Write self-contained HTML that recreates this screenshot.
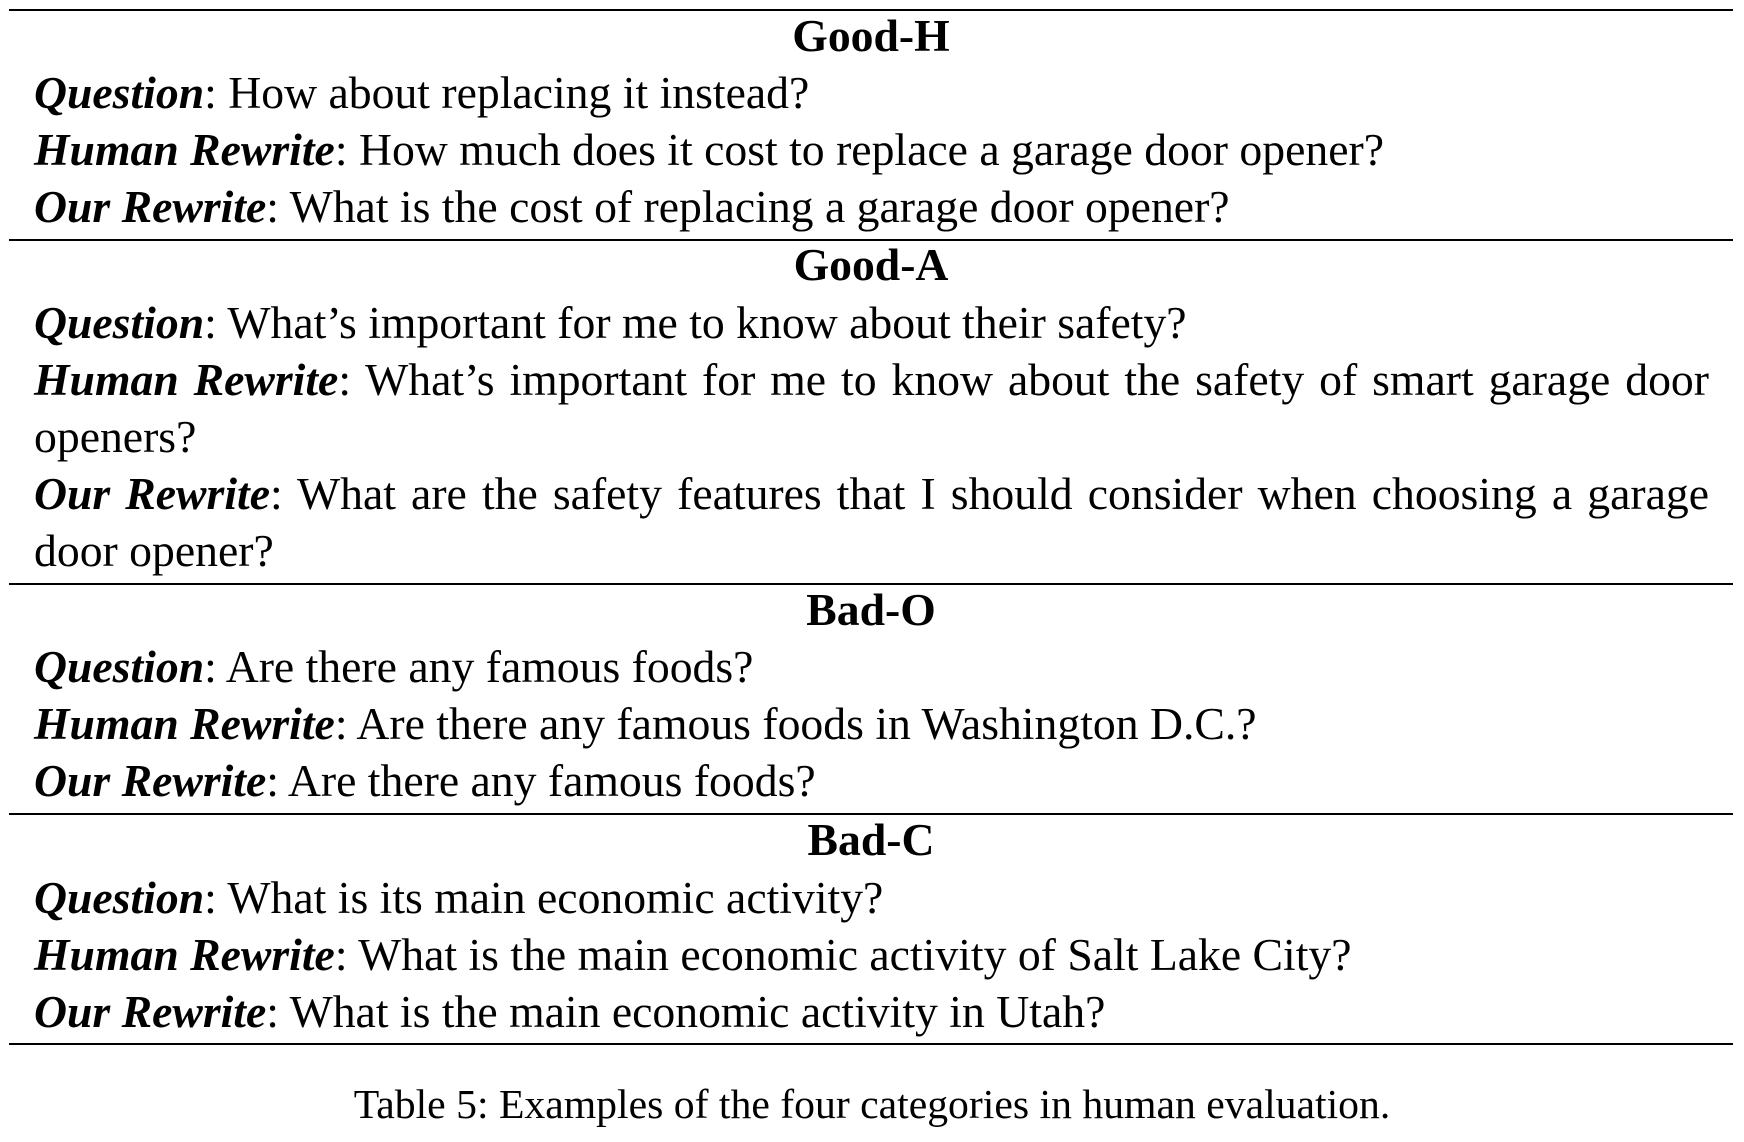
<!DOCTYPE html>
<html><head><meta charset="utf-8"><style>
html,body{margin:0;padding:0;background:#fff;}
body{width:1744px;height:1142px;position:relative;overflow:hidden;font-family:"Liberation Serif","Times New Roman",serif;font-size:45.7px;color:#000;}
.l{position:absolute;left:34px;width:1675px;height:57px;line-height:57px;white-space:nowrap;margin-top:-2px;}
.h{text-align:center;font-weight:bold;left:9px;width:1724px;}
.j{text-align:justify;text-align-last:justify;}
.r{position:absolute;left:9px;width:1724px;height:2px;background:#000;}
b i,i b{font-weight:bold;font-style:italic;}
.c{position:absolute;left:0;width:1744px;text-align:center;top:1077px;line-height:57px;font-size:41.7px;}
</style></head><body>
<div class="r" style="top:9px"></div>
<div class="l h" style="top:9px">Good-H</div>
<div class="l" style="top:66px"><b><i>Question</i></b>: How about replacing it instead?</div>
<div class="l" style="top:123px"><b><i>Human Rewrite</i></b>: How much does it cost to replace a garage door opener?</div>
<div class="l" style="top:180px"><b><i>Our Rewrite</i></b>: What is the cost of replacing a garage door opener?</div>
<div class="r" style="top:239px"></div>
<div class="l h" style="top:238px">Good-A</div>
<div class="l" style="top:296px"><b><i>Question</i></b>: What’s important for me to know about their safety?</div>
<div class="l j" style="top:353px"><b><i>Human Rewrite</i></b>: What’s important for me to know about the safety of smart garage door</div>
<div class="l" style="top:410px">openers?</div>
<div class="l j" style="top:467px"><b><i>Our Rewrite</i></b>: What are the safety features that I should consider when choosing a garage</div>
<div class="l" style="top:524px">door opener?</div>
<div class="r" style="top:583px"></div>
<div class="l h" style="top:583px">Bad-O</div>
<div class="l" style="top:640px"><b><i>Question</i></b>: Are there any famous foods?</div>
<div class="l" style="top:697px"><b><i>Human Rewrite</i></b>: Are there any famous foods in Washington D.C.?</div>
<div class="l" style="top:754px"><b><i>Our Rewrite</i></b>: Are there any famous foods?</div>
<div class="r" style="top:813px"></div>
<div class="l h" style="top:813px">Bad-C</div>
<div class="l" style="top:871px"><b><i>Question</i></b>: What is its main economic activity?</div>
<div class="l" style="top:928px"><b><i>Human Rewrite</i></b>: What is the main economic activity of Salt Lake City?</div>
<div class="l" style="top:985px"><b><i>Our Rewrite</i></b>: What is the main economic activity in Utah?</div>
<div class="r" style="top:1043px"></div>
<div class="c">Table 5: Examples of the four categories in human evaluation.</div>
</body></html>
